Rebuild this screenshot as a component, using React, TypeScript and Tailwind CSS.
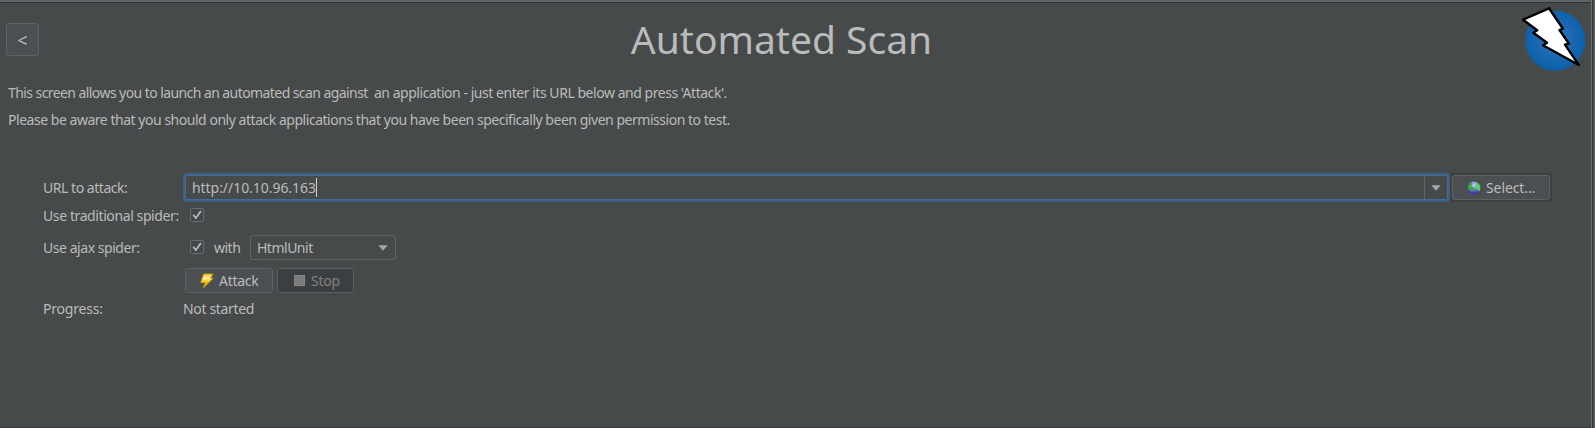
import React from 'react';

function Checkbox() {
  return (
    <span role="checkbox" aria-checked="true" className="block size-3.5 shrink-0 rounded-[2px] border border-[#6b6b6b] bg-[#43494a]">
      <svg viewBox="0 0 12 12" className="block size-3">
        <path d="M2.3 5.9 L4.9 9 L9.9 2" fill="none" stroke="#b4b6b7" strokeWidth="1.9" />
      </svg>
    </span>
  );
}

function Arrow() {
  return (
    <svg viewBox="0 0 10 6" className="block h-1.5 w-2.5 shrink-0">
      <path d="M0.3 0.3 H9.7 L5 5.7 Z" fill="#a2a5a9" />
    </svg>
  );
}

function ZapLogo() {
  return (
    <svg viewBox="0 0 60 66" className="mt-0.5 block h-[66px] w-[60px] shrink-0 overflow-visible">
      <defs>
        <radialGradient id="disc" cx="50%" cy="48%" r="52%">
          <stop offset="0" stopColor="#3f74b8" />
          <stop offset="0.65" stopColor="#1766b0" />
          <stop offset="1" stopColor="#0b60aa" />
        </radialGradient>
      </defs>
      <circle cx="32.3" cy="35.7" r="30" fill="url(#disc)" />
      <path
        d="M0 14.7 L26 3.3 L40 23.7 L36.5 25 L46 38.7 L42 39.7 L55.8 60 L20 40.2 L24 37.7 L10.3 27.7 L14.2 25.2 Z"
        fill="#fff"
        stroke="#000"
        strokeWidth="2.4"
        strokeLinejoin="round"
      />
    </svg>
  );
}

function Bolt() {
  return (
    <svg viewBox="0 0 14 16" className="block h-4 w-3.5 shrink-0">
      <defs>
        <linearGradient id="bolt" x1="0" y1="0" x2="0" y2="1">
          <stop offset="0" stopColor="#f3c21c" />
          <stop offset="0.3" stopColor="#fff0a0" />
          <stop offset="0.55" stopColor="#f2c40c" />
          <stop offset="1" stopColor="#dba004" />
        </linearGradient>
      </defs>
      <path d="M3.8 1 H12.8 L10.4 5.2 H13.2 L3.2 15 L5.4 9.5 H0.8 Z" fill="url(#bolt)" stroke="#dba60c" strokeWidth="0.8" />
    </svg>
  );
}

function Globe() {
  return (
    <svg viewBox="0 0 14 14" className="block size-3.5 shrink-0">
      <defs>
        <radialGradient id="sea" cx="50%" cy="25%" r="70%">
          <stop offset="0" stopColor="#c3c9f5" />
          <stop offset="0.6" stopColor="#6a70d0" />
          <stop offset="1" stopColor="#3432a2" />
        </radialGradient>
      </defs>
      <circle cx="7" cy="7" r="6.4" fill="url(#sea)" />
      <path d="M3.6 1.6 L5.4 2.2 L4.6 4.4 L3.2 6 L6.6 6.8 L7.2 8.4 L5 10.8 L3.2 9 L0.8 7.8 Q0.6 3.6 3.6 1.6 Z" fill="#35a53a" />
      <path d="M9 1.2 Q13.7 3 13.3 8 L12 10.6 L10.2 8.6 L8.4 6.6 L9.6 4.4 L8.4 3 Z" fill="#5ad455" />
    </svg>
  );
}

const button = 'flex shrink-0 items-center rounded-[3px] border border-[#5e6263] bg-[#4b4f51]';

export default function App() {
  return (
    <div className="flex h-[428px] w-[1595px] overflow-hidden whitespace-pre bg-[#464a4a] font-['Noto_Sans',sans-serif] text-[14px] leading-5 text-[#bbbbbb]">
      <main className="flex min-w-0 flex-1 flex-col border-b border-t-2 border-b-[#3d3b40] border-t-[#616466]">
        <div className="h-px shrink-0 bg-[#303233]" />
        <header className="flex h-[73px] shrink-0 items-start pl-1.5">
          <button className={`${button} mt-5 h-[33px] w-[33px] justify-center text-[18px]`}>&lt;</button>
          <h1 className="mt-[10px] flex-1 pl-px text-center text-[39px] leading-[52px]">Automated Scan</h1>
          <div className="flex w-[68px] shrink-0"><ZapLogo /></div>
        </header>

        <div className="flex shrink-0 flex-col gap-[7px] pl-2 pt-[7px]">
          <p className="tracking-[-0.46px]"><span className="tracking-[-0.575px]">This screen allows you to launch an automated scan against  </span>an application - just enter its URL below and press 'Attack'.</p>
          <p className="tracking-[-0.47px]">Please be aware that you should only attack applications that you have been specifically been given permission to test.</p>
        </div>

        <form className="mt-[43px] flex flex-col">
          <div className="flex h-[29px] items-center">
            <label className="w-[183px] pl-[43px] tracking-[-0.46px]">URL to attack:</label>
            <div className="flex h-[29px] w-[1267px] items-stretch rounded-[4px] border-2 border-[#3d6185]">
              <div className="flex flex-1 items-stretch rounded-[2px] border border-[#466d94]">
                <div className="flex flex-1 items-center pl-1.5">
                  <span className="tracking-[-0.05px]">http://10.10.96.163</span>
                  <span className="h-[19px] w-px bg-[#d0d0d0]" />
                </div>
                <div className="flex w-[23px] items-center justify-center border-l border-[#646464] pr-px"><Arrow /></div>
              </div>
            </div>
            <div className="flex h-[29px] w-[102px] items-center bg-[#3e4142] pl-0.5">
              <button type="button" className={`${button} h-[25px] w-[98px] gap-[5px] pl-[14px] tracking-[-0.1px]`}><Globe />Select...</button>
            </div>
          </div>

          <div className="flex h-[26px] items-center">
            <label className="w-[190px] pl-[43px] pt-0.5 tracking-[-0.4px]">Use traditional spider:</label>
            <Checkbox />
          </div>

          <div className="mt-[7px] flex h-[25px] items-center">
            <label className="w-[190px] pl-[43px] tracking-[-0.45px]">Use ajax spider:</label>
            <span className="pb-px"><Checkbox /></span>
            <span className="w-[46px] pl-[10px] tracking-[-0.5px]">with</span>
            <div className="flex h-[25px] w-[146px] items-center justify-between rounded-[3px] border border-[#646464] pl-1.5 pr-[7px]">
              <span className="tracking-[-0.5px]">HtmlUnit</span>
              <Arrow />
            </div>
          </div>

          <div className="mt-2 flex h-[25px] gap-1 pl-[185px]">
            <button type="button" className={`${button} w-[88px] gap-[5px] pl-[14px] tracking-[-0.3px]`}><Bolt />Attack</button>
            <button type="button" disabled className="flex w-[77px] items-center gap-1.5 rounded-[3px] border border-[#5e6060] bg-[#3c3f41] pl-[16px] tracking-[-0.2px] text-[#808080]">
              <span className="size-[11px] border border-[#858585] bg-[#7b7b7b]" />Stop
            </button>
          </div>

          <div className="mt-[6px] flex h-5 items-center">
            <span className="w-[183px] pl-[43px] tracking-[-0.2px]">Progress:</span>
            <span className="tracking-[-0.33px]">Not started</span>
          </div>
        </form>
      </main>
      <div className="flex w-1 shrink-0">
        <div className="w-px bg-[#6b6e6f]" />
        <div className="w-px bg-[#343637]" />
        <div className="w-px bg-[#464a4a]" />
        <div className="w-px bg-[#606364]" />
      </div>
    </div>
  );
}
